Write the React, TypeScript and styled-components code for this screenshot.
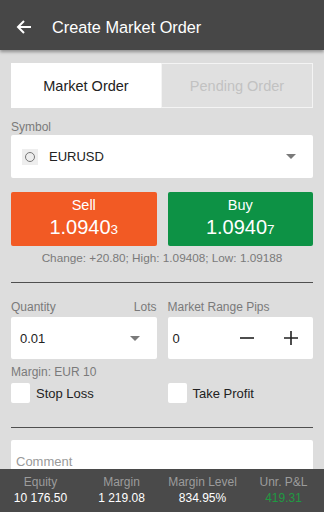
import React from "react";
import styled, { createGlobalStyle } from "styled-components";

const GlobalStyle = createGlobalStyle`
  html, body {
    margin: 0;
    padding: 0;
    background: #dddddd;
    font-family: "Liberation Sans", Arial, sans-serif;
  }
  * { box-sizing: border-box; }
`;

const Screen = styled.div`
  width: 324px;
  height: 512px;
  display: flex;
  flex-direction: column;
  overflow: hidden;
  background: #dddddd;
`;

const Header = styled.div`
  height: 50px;
  flex: none;
  display: flex;
  align-items: center;
  padding-top: 4px;
  background: #474747;
  box-shadow: 0 2px 3px rgba(0, 0, 0, 0.35);
  position: relative;
  z-index: 1;
`;

const BackButton = styled.div`
  width: 52px;
  display: flex;
  justify-content: center;
  padding-right: 4px;
`;

const Title = styled.div`
  color: #ffffff;
  font-size: 16.3px;
`;

const Body = styled.div`
  flex: 1;
  min-height: 0;
  overflow: hidden;
  padding: 13px 11px 0;
`;

const Tabs = styled.div`
  display: grid;
  grid-template-columns: 150px 1fr;
  height: 45px;
`;

const Tab = styled.div<{ $active?: boolean }>`
  display: flex;
  align-items: center;
  justify-content: center;
  font-size: 14.5px;
  background: ${(p) => (p.$active ? "#ffffff" : "#e0e0e0")};
  color: ${(p) => (p.$active ? "#222222" : "#c2c2c2")};
  border: 1px solid ${(p) => (p.$active ? "#ffffff" : "#f4f4f4")};
`;

const Label = styled.div`
  font-size: 12px;
  color: #7a7a7a;
  line-height: 14px;
`;

const SymbolLabel = styled(Label)`
  margin-top: 12px;
  margin-bottom: 1px;
`;

const Field = styled.div<{ $height: number }>`
  height: ${(p) => p.$height}px;
  background: #ffffff;
  border-radius: 2px;
  display: flex;
  align-items: center;
`;

const SymbolIcon = styled.div`
  width: 16px;
  height: 16px;
  margin-left: 11px;
  background: #eeeeee;
  display: flex;
  align-items: center;
  justify-content: center;
`;

const Circle = styled.div`
  width: 10px;
  height: 10px;
  border-radius: 50%;
  border: 1.5px solid #777777;
`;

const FieldText = styled.div<{ $indent: number }>`
  flex: 1;
  font-size: 13px;
  color: #222222;
  padding-left: ${(p) => p.$indent}px;
`;

const Caret = styled.div`
  width: 0;
  height: 0;
  border-left: 5px solid transparent;
  border-right: 5px solid transparent;
  border-top: 5px solid #7a7a7a;
  margin-right: 17px;
`;

const Columns = styled.div<{ $top: number }>`
  display: grid;
  grid-template-columns: 1fr 1fr;
  column-gap: 11px;
  margin-top: ${(p) => p.$top}px;
`;

const TradeButton = styled.div<{ $color: string }>`
  height: 54px;
  border-radius: 2px;
  background: ${(p) => p.$color};
  color: #ffffff;
  display: flex;
  flex-direction: column;
  align-items: center;
  justify-content: center;
`;

const TradeTitle = styled.div`
  font-size: 14.5px;
  line-height: 17px;
`;

const Price = styled.div`
  font-size: 20px;
  line-height: 24px;
  margin-top: 1px;
`;

const PriceTail = styled.span`
  font-size: 13.5px;
`;

const ChangeText = styled.div`
  text-align: center;
  font-size: 11.75px;
  color: #7a7a7a;
  margin-top: 5px;
  line-height: 14px;
`;

const Divider = styled.div<{ $top: number }>`
  height: 1px;
  background: #4f4f4f;
  margin-top: ${(p) => p.$top}px;
`;

const LabelRow = styled.div`
  display: flex;
  justify-content: space-between;
  margin-bottom: 3px;
`;

const StepButton = styled.div`
  width: 44px;
  display: flex;
  justify-content: center;
  align-items: center;
`;

const MarginText = styled(Label)`
  margin-top: 6px;
`;

const CheckRow = styled.label`
  display: flex;
  align-items: center;
  gap: 6px;
  font-size: 13px;
  color: #222222;
`;

const CheckBox = styled.div`
  width: 19px;
  height: 20px;
  background: #ffffff;
  border-radius: 2px;
`;

const CommentBox = styled.div`
  margin-top: 12px;
  background: #ffffff;
  height: 60px;
  padding: 14px 5px 0;
  font-size: 13px;
  color: #9a9a9a;
  border-radius: 2px;
`;

const Footer = styled.div`
  height: 43px;
  flex: none;
  background: #4a4a4a;
  display: grid;
  grid-template-columns: repeat(4, 1fr);
  align-items: center;
`;

const Stat = styled.div`
  display: flex;
  flex-direction: column;
  align-items: center;
`;

const StatLabel = styled.div`
  font-size: 12px;
  color: #9c9c9c;
  line-height: 15px;
`;

const StatValue = styled.div<{ $color?: string }>`
  font-size: 12px;
  color: ${(p) => p.$color || "#ffffff"};
  line-height: 16px;
`;

const stats = [
  { label: "Equity", value: "10 176.50" },
  { label: "Margin", value: "1 219.08" },
  { label: "Margin Level", value: "834.95%" },
  { label: "Unr. P&L", value: "419.31", color: "#1f9a42" },
];

const App: React.FC = () => (
  <>
    <GlobalStyle />
    <Screen>
      <Header>
        <BackButton>
          <svg width="16" height="16" viewBox="0 0 16 16">
            <path
              d="M15 8H2M8 2L2 8l6 6"
              fill="none"
              stroke="#ffffff"
              strokeWidth="2"
            />
          </svg>
        </BackButton>
        <Title>Create Market Order</Title>
      </Header>
      <Body>
        <Tabs>
          <Tab $active>Market Order</Tab>
          <Tab>Pending Order</Tab>
        </Tabs>
        <SymbolLabel>Symbol</SymbolLabel>
        <Field $height={43}>
          <SymbolIcon>
            <Circle />
          </SymbolIcon>
          <FieldText $indent={11}>EURUSD</FieldText>
          <Caret />
        </Field>
        <Columns $top={14}>
          <TradeButton $color="#f25a24">
            <TradeTitle>Sell</TradeTitle>
            <Price>
              1.0940<PriceTail>3</PriceTail>
            </Price>
          </TradeButton>
          <TradeButton $color="#0d9245">
            <TradeTitle>Buy</TradeTitle>
            <Price>
              1.0940<PriceTail>7</PriceTail>
            </Price>
          </TradeButton>
        </Columns>
        <ChangeText>Change: +20.80; High: 1.09408; Low: 1.09188</ChangeText>
        <Divider $top={17} />
        <Columns $top={17}>
          <div>
            <LabelRow>
              <Label>Quantity</Label>
              <Label>Lots</Label>
            </LabelRow>
            <Field $height={42}>
              <FieldText $indent={9}>0.01</FieldText>
              <Caret />
            </Field>
          </div>
          <div>
            <LabelRow>
              <Label>Market Range Pips</Label>
            </LabelRow>
            <Field $height={42}>
              <FieldText $indent={5}>0</FieldText>
              <StepButton>
                <svg width="14" height="14" viewBox="0 0 14 14">
                  <path d="M0 7h14" stroke="#222" strokeWidth="1.6" />
                </svg>
              </StepButton>
              <StepButton>
                <svg width="14" height="14" viewBox="0 0 14 14">
                  <path d="M0 7h14M7 0v14" stroke="#222" strokeWidth="1.6" />
                </svg>
              </StepButton>
            </Field>
          </div>
        </Columns>
        <MarginText>Margin: EUR 10</MarginText>
        <Columns $top={4}>
          <CheckRow>
            <CheckBox />
            Stop Loss
          </CheckRow>
          <CheckRow>
            <CheckBox />
            Take Profit
          </CheckRow>
        </Columns>
        <Divider $top={24} />
        <CommentBox>Comment</CommentBox>
      </Body>
      <Footer>
        {stats.map((s) => (
          <Stat key={s.label}>
            <StatLabel>{s.label}</StatLabel>
            <StatValue $color={s.color}>{s.value}</StatValue>
          </Stat>
        ))}
      </Footer>
    </Screen>
  </>
);

export default App;
